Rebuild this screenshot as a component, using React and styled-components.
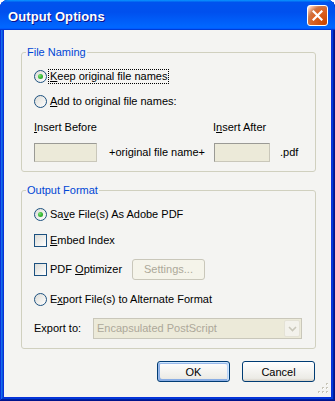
import React from 'react'
import styled, { createGlobalStyle, css } from 'styled-components'

const GlobalStyle = createGlobalStyle`
  html, body {
    margin: 0;
    padding: 0;
    background: #ffffff;
  }
  body {
    font-family: 'Liberation Sans', Arial, sans-serif;
    font-size: 11px;
  }
  * {
    box-sizing: border-box;
  }
`

const Window = styled.div`
  width: 335px;
  height: 401px;
  display: flex;
  flex-direction: column;
  border-radius: 8px 8px 0 0;
  overflow: hidden;
  background: #0831d9;
  box-shadow: inset -1px -1px #00138c, inset 1px 1px #0831d9, inset -2px -2px #001ea0,
    inset 2px 2px #166aee, inset -3px -3px #003bda, inset 3px 3px #0855dd;
`

const TitleBar = styled.div`
  height: 30px;
  flex: none;
  display: flex;
  align-items: center;
  justify-content: space-between;
  padding: 0 7px 0 8px;
  background: linear-gradient(
    180deg,
    #0997ff 0%,
    #0053ee 8%,
    #0050ee 40%,
    #0066ff 88%,
    #0066ff 93%,
    #005bff 95%,
    #003dd7 96%,
    #003dd7 100%
  );
`

const Title = styled.div`
  font-family: 'Liberation Sans', Arial, sans-serif;
  font-weight: bold;
  font-size: 13px;
  line-height: 13px;
  padding-top: 2px;
  color: #ffffff;
  text-shadow: 1px 1px #0f1089;
  letter-spacing: 0.1px;
`

const CloseButton = styled.div`
  width: 21px;
  height: 21px;
  border: 1px solid #ffffff;
  border-radius: 3px;
  display: flex;
  align-items: center;
  justify-content: center;
  background: radial-gradient(circle at 90% 90%, #cc4600 0%, #dc6527 55%, #cd7546 70%, #ffccb2 90%, #ffffff 100%);
`

const Body = styled.div`
  position: relative;
  flex: 1;
  margin: 0 4px 4px;
  background: #f4f4f2;
  display: flex;
  flex-direction: column;
`

const Group = styled.fieldset`
  margin: ${(p) => p.$top}px 15px 0 17px;
  padding: 0;
  border: 1px solid #d0d0bf;
  border-radius: 3px;
  min-width: 0;
`

const Legend = styled.legend`
  margin-left: 4px;
  padding: 0 1px;
  line-height: 13px;
  font-size: 11px;
  color: #0046d5;
`

const Content = styled.div`
  padding: 7px 0 9px 12px;
  display: flex;
  flex-direction: column;
`

const Row = styled.div`
  display: flex;
  align-items: center;
  height: ${(p) => p.$h || 20}px;
  margin-top: ${(p) => p.$mt || 0}px;
  color: #000000;
  line-height: 13px;
`

const Label = styled.span`
  padding: 0 1px;
  margin-left: 2px;
  line-height: 13px;
  white-space: nowrap;
  ${(p) => p.$w && css`width: ${p.$w}px;`}
  ${(p) =>
    p.$focus &&
    css`
      outline: 1px dotted #000000;
      outline-offset: 0px;
    `}
`

const Plain = styled.span`
  white-space: nowrap;
  ${(p) => p.$w && css`width: ${p.$w}px; flex: none;`}
`

const Radio = styled.span`
  position: relative;
  flex: none;
  width: 13px;
  height: 13px;
  border-radius: 50%;
  border: 1px solid #1c5180;
  background: linear-gradient(135deg, #dcdcd7 0%, #ffffff 100%);
  ${(p) =>
    p.$checked &&
    css`
      &::after {
        content: '';
        position: absolute;
        left: 3px;
        top: 3px;
        width: 5px;
        height: 5px;
        border-radius: 50%;
        background: radial-gradient(circle at 35% 35%, #7ee27a 0%, #3dbb39 45%, #1e9a1e 100%);
      }
    `}
`

const Check = styled.span`
  flex: none;
  width: 13px;
  height: 13px;
  border: 1px solid #1c5180;
  background: linear-gradient(135deg, #dcdcd7 0%, #ffffff 100%);
`

const TextBox = styled.div`
  flex: none;
  width: ${(p) => p.$w}px;
  height: 19px;
  background: #ecead9;
  border: 1px solid;
  border-color: #9a9a95 #c9c7ba #c9c7ba #9a9a95;
`

const Button = styled.div`
  flex: none;
  width: 73px;
  height: 21px;
  display: flex;
  align-items: center;
  justify-content: center;
  border: 1px solid #003c74;
  border-radius: 3px;
  font-size: 11px;
  color: #000000;
  background: linear-gradient(180deg, #ffffff, #ecebe6 86%, #d6d0c5);
  ${(p) =>
    p.$default &&
    css`
      box-shadow: inset -1px 1px #cee7ff, inset 1px 2px #98b8ea, inset -2px 2px #bcd4f6,
        inset 1px -1px #89ade4, inset 2px -2px #89ade4;
    `}
  ${(p) =>
    p.$disabled &&
    css`
      border-color: #c9c7ba;
      color: #aca899;
      background: #f5f4ea;
    `}
`

const Select = styled.div`
  flex: none;
  width: 209px;
  height: 21px;
  display: flex;
  align-items: center;
  justify-content: space-between;
  padding: 0 1px 0 3px;
  border: 1px solid #c9c7ba;
  background: #ecead9;
  color: #aca899;
`

const DropArrow = styled.div`
  width: 16px;
  height: 17px;
  display: flex;
  align-items: center;
  justify-content: center;
  border: 1px solid #e4e2d6;
  border-radius: 2px;
  background: #f3f2ec;
`

const ButtonRow = styled.div`
  display: flex;
  justify-content: flex-end;
  gap: 12px;
  margin-top: 12px;
  padding-right: 16px;
`

const Grip = styled.svg`
  position: absolute;
  right: 1px;
  bottom: 2px;
`

const Key = styled.span`
  text-decoration: underline;
  text-underline-offset: 1px;
`

export default function App() {
  return (
    <>
      <GlobalStyle />
      <Window>
        <TitleBar>
          <Title>Output Options</Title>
          <CloseButton>
            <svg width="11" height="11" viewBox="0 0 11 11">
              <path d="M1.5 1.5 L9.5 9.5 M9.5 1.5 L1.5 9.5" stroke="#ffffff" strokeWidth="2.2" strokeLinecap="square" />
            </svg>
          </CloseButton>
        </TitleBar>
        <Body>
          <Group $top={16}>
            <Legend>File Naming</Legend>
            <Content>
              <Row>
                <Radio $checked />
                <Label $focus>
                  <Key>K</Key>eep original file names
                </Label>
              </Row>
              <Row $mt={5}>
                <Radio />
                <Label>
                  <Key>A</Key>dd to original file names:
                </Label>
              </Row>
              <Row $mt={6}>
                <Plain $w={179}>
                  <Key>I</Key>nsert Before
                </Plain>
                <Plain>
                  I<Key>n</Key>sert After
                </Plain>
              </Row>
              <Row $mt={6} $h={19}>
                <TextBox $w={63} />
                <Plain $w={117} style={{ paddingLeft: 12 }}>
                  +original file name+
                </Plain>
                <TextBox $w={56} />
                <Plain style={{ paddingLeft: 10 }}>.pdf</Plain>
              </Row>
            </Content>
          </Group>

          <Group $top={12}>
            <Legend>Output Format</Legend>
            <Content>
              <Row>
                <Radio $checked />
                <Label>
                  Sa<Key>v</Key>e File(s) As Adobe PDF
                </Label>
              </Row>
              <Row $mt={6}>
                <Check />
                <Label>
                  <Key>E</Key>mbed Index
                </Label>
              </Row>
              <Row $mt={9} $h={21}>
                <Check />
                <Label $w={83}>
                  PDF <Key>O</Key>ptimizer
                </Label>
                <Button $disabled>Settings...</Button>
              </Row>
              <Row $mt={9}>
                <Radio />
                <Label>
                  E<Key>x</Key>port File(s) to Alternate Format
                </Label>
              </Row>
              <Row $mt={9} $h={21}>
                <Plain $w={59}>Export to:</Plain>
                <Select>
                  <span>Encapsulated PostScript</span>
                  <DropArrow>
                    <svg width="9" height="6" viewBox="0 0 9 6">
                      <path d="M1 1 L4.5 4.5 L8 1" fill="none" stroke="#c9c7ba" strokeWidth="1.6" />
                    </svg>
                  </DropArrow>
                </Select>
              </Row>
            </Content>
          </Group>

          <ButtonRow>
            <Button $default>OK</Button>
            <Button>Cancel</Button>
          </ButtonRow>

          <Grip width="12" height="12" viewBox="0 0 12 12">
            <g fill="#c8c6b9">
              <rect x="8" y="0" width="2" height="2" />
              <rect x="4" y="4" width="2" height="2" />
              <rect x="8" y="4" width="2" height="2" />
              <rect x="0" y="8" width="2" height="2" />
              <rect x="4" y="8" width="2" height="2" />
              <rect x="8" y="8" width="2" height="2" />
            </g>
            <g fill="#ffffff">
              <rect x="9" y="1" width="1" height="1" />
              <rect x="5" y="5" width="1" height="1" />
              <rect x="9" y="5" width="1" height="1" />
              <rect x="1" y="9" width="1" height="1" />
              <rect x="5" y="9" width="1" height="1" />
              <rect x="9" y="9" width="1" height="1" />
            </g>
          </Grip>
        </Body>
      </Window>
    </>
  )
}
